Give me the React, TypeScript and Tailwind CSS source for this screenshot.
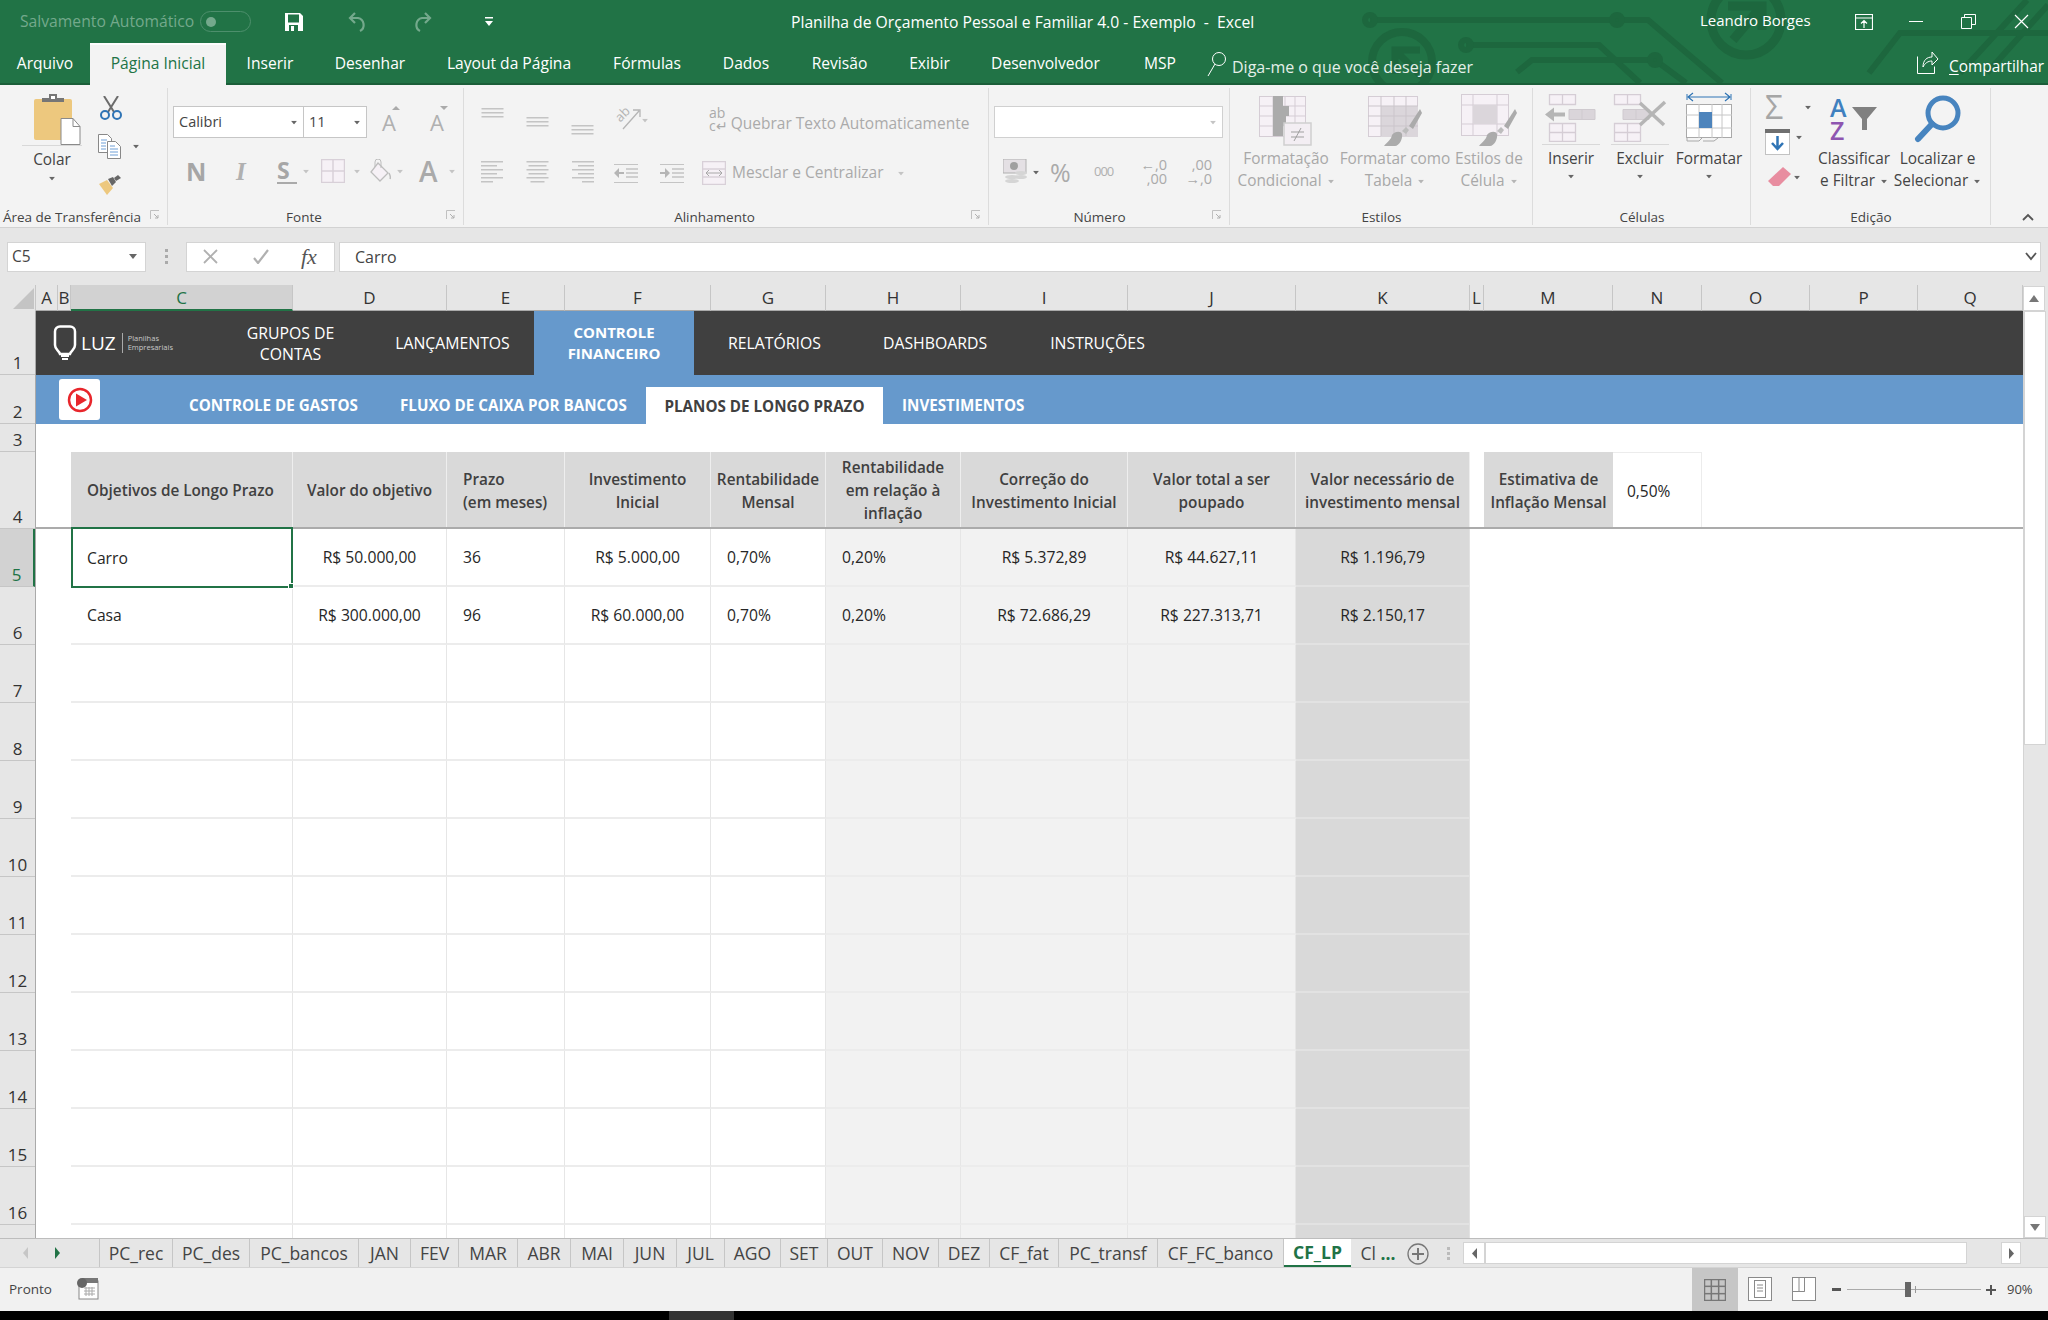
import type { ReactNode } from "react";

const disabledLine = "#c4c4c4";

function Caret({ color = "#666", className = "" }: { color?: string; className?: string }) {
  return (
    <svg width="8" height="5" viewBox="0 0 8 5" className={`shrink-0 ${className}`}>
      <path d="M0 0h8L4 5z" fill={color} />
    </svg>
  );
}

function Launcher() {
  return (
    <svg width="10" height="10" viewBox="0 0 10 10" className="absolute right-[8px] bottom-[7px]">
      <path d="M0.5 9V0.5H9" fill="none" stroke="#c0c0c0" />
      <path d="M4 4l4 4M8 5v3H5" fill="none" stroke="#b0b0b0" />
    </svg>
  );
}

function Group({ w, label, labelClass = "", launcher, children }: { w: string; label: string; labelClass?: string; launcher?: boolean; children: ReactNode }) {
  return (
    <div className={`relative flex h-[142px] shrink-0 flex-col ${w}`}>
      <div className="flex-1">{children}</div>
      <div className={`h-[20px] text-center text-[13.5px] leading-[20px] whitespace-nowrap text-[#444] ${labelClass}`}>{label}</div>
      {launcher && <Launcher />}
      <div className="absolute top-[3px] right-0 bottom-[2px] w-px bg-[#dcdcdc]" />
    </div>
  );
}

function PasteIcon() {
  return (
    <svg width="48" height="52" viewBox="0 0 48 52" className="ml-[11px]">
      <rect x="0" y="6" width="38" height="41" rx="2" fill="#edc87e" />
      <path d="M8 9V5h7V1h8v4h7v4z" fill="#767676" />
      <rect x="17" y="3" width="4" height="3" fill="#fff" />
      <path d="M27 25.500h12l7 8v18H27z" fill="#fff" stroke="#8a8a8a" />
      <path d="M39 25.500v8h7" fill="none" stroke="#8a8a8a" />
    </svg>
  );
}

function ScissorsIcon() {
  return (
    <svg width="22" height="24" viewBox="0 0 22 24">
      <path d="M4 0l10 16M18 0L8 16" stroke="#6b6b6b" strokeWidth="2" fill="none" />
      <circle cx="5" cy="19" r="4" fill="none" stroke="#2f74b5" strokeWidth="2" />
      <circle cx="17" cy="19" r="4" fill="none" stroke="#2f74b5" strokeWidth="2" />
    </svg>
  );
}

function CopyIcon() {
  return (
    <svg width="23" height="25" viewBox="0 0 23 25">
      <path d="M.5.5h9l4 4v14H.5z" fill="#fff" stroke="#888" />
      <path d="M9.500 7.500h8l5 5v12h-13z" fill="#fff" stroke="#888" />
      <path d="M3 6h6M3 9h5M3 12h5M3 15h5M12 12h5M12 15h8M12 18h8M12 21h8" stroke="#6f9fd6" />
    </svg>
  );
}

function BrushIcon() {
  return (
    <svg width="23" height="20" viewBox="0 0 23 20">
      <path d="M0 9l8-4 6 8-6 7z" fill="#edc87e" />
      <path d="M9 4l5-2 3 5-4 4z" fill="#666" />
      <path d="M15 3l4-3 3 3-5 3z" fill="#666" />
    </svg>
  );
}

function TableIcon({ w, h, cols, rows, stroke = "#d8d0d8", fill = "#f6f1f6" }: { w: number; h: number; cols: number; rows: number; stroke?: string; fill?: string }) {
  const xs = Array.from({ length: cols - 1 }, (_, i) => ((i + 1) * w) / cols);
  const ys = Array.from({ length: rows - 1 }, (_, i) => ((i + 1) * h) / rows);
  return (
    <svg width={w} height={h} viewBox={`0 0 ${w} ${h}`} className="shrink-0">
      <rect x=".5" y=".5" width={w - 1} height={h - 1} fill={fill} stroke={stroke} strokeWidth="1.5" />
      {xs.map((x) => (
        <path key={x} d={`M${x} 0V${h}`} stroke={stroke} strokeWidth="1.5" />
      ))}
      {ys.map((y) => (
        <path key={y} d={`M0 ${y}H${w}`} stroke={stroke} strokeWidth="1.5" />
      ))}
    </svg>
  );
}

function LinesIcon({ widths, align = "center", className = "" }: { widths: number[]; align?: "left" | "center" | "right"; className?: string }) {
  return (
    <svg width="23" height={widths.length * 4} viewBox={`0 0 23 ${widths.length * 4}`} className={`shrink-0 ${className}`}>
      {widths.map((wd, i) => {
        const x = align === "left" ? 0 : align === "right" ? 23 - wd : (23 - wd) / 2;
        return <rect key={i} x={x} y={i * 4} width={wd} height="1.5" fill={disabledLine} />;
      })}
    </svg>
  );
}

function IndentIcon({ right }: { right?: boolean }) {
  return (
    <svg width="24" height="19" viewBox="0 0 24 19" className="shrink-0">
      <path d="M0 .5h24M0 18.500h24" stroke={disabledLine} />
      <path d="M12 5h12M12 9h12M12 13h12" stroke={disabledLine} strokeWidth="1.4" />
      {right ? <path d="M0 8h5V4l5 5-5 5v-4H0z" fill="#b5b5b5" /> : <path d="M10 8H5V4L0 9l5 5v-4h5z" fill="#b5b5b5" />}
    </svg>
  );
}

function FormatIcon({ kind }: { kind: "cond" | "table" | "cell" }) {
  if (kind === "cond") {
    return (
      <svg width="54" height="50" viewBox="0 0 54 50">
        <rect x=".5" y=".5" width="46" height="40" fill="#f6f1f6" stroke="#d5cdd5" />
        <path d="M0 10h46M0 20h46M0 30h46M14 0v40M26 0v40M36 0v40" stroke="#d5cdd5" />
        <path d="M14 0h10v10h6v10h-3v10h-3v10H14z" fill="#ababab" />
        <rect x="25" y="27" width="27" height="22" fill="#f3eef3" stroke="#cfcfcf" strokeWidth="1.5" />
        <path d="M32 36h13M32 41h13M42 32l-7 13" stroke="#9f9f9f" />
      </svg>
    );
  }
  if (kind === "table") {
    return (
      <svg width="54" height="50" viewBox="0 0 54 50">
        <rect x=".5" y=".5" width="49" height="40" fill="#f6f1f6" stroke="#d5cdd5" />
        <rect x="13" y="10" width="37" height="31" fill="#dbd6db" />
        <path d="M0 10h50M0 20h50M0 30h50M13 0v40M26 0v40M38 0v40" stroke="#cbc5cb" />
        <path d="M52 13l2 4-9 16-4-3z" fill="#ababab" />
        <path d="M38 31l-4 4 4 3 3-4z" fill="#bdbdbd" />
        <path d="M16 50c4-5 7-6 8-11 3-4 9-4 10-1 1 5-3 12-7 12z" fill="#ababab" />
      </svg>
    );
  }
  return (
    <svg width="56" height="52" viewBox="0 0 56 52">
      <rect x=".5" y=".5" width="47" height="41" fill="#f6f1f6" stroke="#d5cdd5" />
      <path d="M0 11h48M0 30h48M12 0v41M36 0v41" stroke="#d5cdd5" />
      <rect x="12" y="11" width="24" height="19" fill="#dbd6db" />
      <path d="M54 15l2 4-9 16-4-3z" fill="#ababab" />
      <path d="M40 33l-4 4 4 3 3-4z" fill="#bdbdbd" />
      <path d="M18 52c4-5 7-6 8-11 3-4 9-4 10-1 1 5-3 12-7 12z" fill="#ababab" />
    </svg>
  );
}

function InsertIcon() {
  return (
    <svg width="52" height="48" viewBox="0 0 52 48">
      <g fill="#f6f1f6" stroke="#d5cdd5" strokeWidth="1.3">
        <path d="M4.500.5h26v10h-26zM17.500.5v10" />
        <path d="M4.500 29.500h26v18h-26zM4.500 38.500h26M17.500 29.500v18" />
      </g>
      <path d="M24 15.500h26v10H24zM37 15.500v10" fill="#dad5da" stroke="#cfcacf" />
      <path d="M20 18.500H9v-5L0 20.500l9 7v-5h11z" fill="#b5b5b5" />
    </svg>
  );
}

function DeleteIcon() {
  return (
    <svg width="54" height="48" viewBox="0 0 54 48">
      <g fill="#f6f1f6" stroke="#d5cdd5" strokeWidth="1.3">
        <path d="M1.500.5h26v10h-26zM14.500.5v10" />
        <path d="M1.500 29.500h26v18h-26zM1.500 38.500h26M14.500 29.500v18" />
      </g>
      <path d="M10 15.500h26v10H10zM23 15.500v10" fill="#dad5da" stroke="#cfcacf" />
      <path d="M27 9l24 22M52 8L27 31" stroke="#b5b5b5" strokeWidth="3.500" />
    </svg>
  );
}

function FormatCellIcon() {
  return (
    <svg width="46" height="50" viewBox="0 0 46 50">
      <path d="M1 2v6M45 2v6" stroke="#2f74b5" />
      <path d="M3 5h40M7 1L2 5l5 4M39 1l5 4-5 4" stroke="#2f74b5" fill="none" strokeWidth="1.200" />
      <rect x=".5" y="12.500" width="45" height="33" fill="#fff" stroke="#a9a9a9" />
      <path d="M0 23h46M0 36h46M13 12v34M26 12v34M36 12v34" stroke="#c6c6c6" />
      <rect x="13" y="20" width="13" height="16" fill="#4d84bc" />
      <path d="M1 46v3h12l3-3M17 49h11l4-3" fill="none" stroke="#a9a9a9" />
    </svg>
  );
}

function StyleButton({ w, icon, lines }: { w: string; icon: ReactNode; lines: [string, string] }) {
  return (
    <div className={`flex shrink-0 flex-col items-center ${w}`}>
      <div className="mt-[9px] flex h-[52px] items-end">{icon}</div>
      <div className="mt-[2px] text-center text-[15.4px] leading-[22px] whitespace-nowrap text-[#a8a8a8]">
        <div>{lines[0]}</div>
        <div className="flex items-center justify-center gap-[5px]">
          {lines[1]}
          <Caret color="#b5b5b5" className="scale-75" />
        </div>
      </div>
    </div>
  );
}

function CellButton({ w, icon, label, line }: { w: string; icon: ReactNode; label: string; line?: boolean }) {
  return (
    <div className={`flex shrink-0 flex-col items-center ${w}`}>
      <div className="flex h-[60px] items-end">{icon}</div>
      <div className={`mt-[2px] w-[58px] ${line ? "border-t border-[#d8d8d8]" : "border-t border-transparent"}`} />
      <div className="mt-[3px] text-[15.4px] leading-[22px] whitespace-nowrap text-[#444]">{label}</div>
      <Caret className="mt-[4px] scale-75" />
    </div>
  );
}

function Ribbon() {
  return (
    <div className="flex h-[143px] border-b border-[#d2d2d2] bg-[#f3f3f3]">
      <Group w="w-[168px]" label="Área de Transferência" labelClass="pr-[24px]" launcher>
        <div className="flex">
          <div className="mt-[8px] ml-[22px] flex w-[60px] flex-col items-center">
            <PasteIcon />
            <div className="w-[60px] border-t border-[#d8d8d8]" />
            <div className="mt-[3px] text-[15.4px] leading-[22px] text-[#444]">Colar</div>
            <Caret className="mt-[5px] scale-75" />
          </div>
          <div className="mt-[11px] ml-[16px] flex flex-col">
            <div className="ml-[2px]">
              <ScissorsIcon />
            </div>
            <div className="mt-[14px] flex items-center gap-[11px]">
              <CopyIcon />
              <Caret className="scale-75" />
            </div>
            <div className="mt-[16px] ml-[1px]">
              <BrushIcon />
            </div>
          </div>
        </div>
      </Group>

      <Group w="w-[296px]" label="Fonte" labelClass="pr-[24px]" launcher>
        <div className="mt-[21px] ml-[5px] flex h-[32px] items-center">
          <div className="flex h-[32px] w-[131px] items-center justify-between border border-[#c6c6c6] bg-white px-[5px] text-[14.5px] text-[#444]">
            Calibri
            <Caret className="scale-75" />
          </div>
          <div className="-ml-px flex h-[32px] w-[64px] items-center justify-between border border-[#c6c6c6] bg-white px-[5px] text-[14.5px] text-[#444]">
            11
            <Caret className="scale-75" />
          </div>
          <div className="relative ml-[15px] w-[17px] text-[22px] leading-none text-[#b0b0b0]">
            A
            <svg width="8" height="4" viewBox="0 0 8 4" className="absolute -top-[5px] left-[10px]">
              <path d="M0 4h8L4 0z" fill="#aaa" />
            </svg>
          </div>
          <div className="relative ml-[31px] w-[17px] text-[22px] leading-none text-[#b0b0b0]">
            A
            <svg width="8" height="4" viewBox="0 0 8 4" className="absolute -top-[5px] left-[10px]">
              <path d="M0 0h8L4 4z" fill="#aaa" />
            </svg>
          </div>
        </div>
        <div className="mt-[21px] ml-[18px] flex h-[24px] items-center">
          <span className="w-[20px] text-[25px] leading-none font-bold text-[#a6a6a6]">N</span>
          <span className="ml-[30px] w-[14px] font-['Liberation_Serif',serif] text-[25px] leading-none font-bold text-[#b0b0b0] italic">I</span>
          <span className="ml-[27px] w-[20px] border-b-2 border-[#aaa] text-[23px] leading-[23px] font-bold text-[#a6a6a6]">S</span>
          <Caret color="#c4c4c4" className="ml-[5px] scale-75" />
          <div className="ml-[11px]">
            <TableIcon w={24} h={24} cols={2} rows={2} />
          </div>
          <Caret color="#c4c4c4" className="ml-[8px] scale-75" />
          <svg width="22" height="24" viewBox="0 0 22 24" className="ml-[8px]">
            <path d="M9 4l10 10-8 8L2 13z" fill="#f6f1f6" stroke="#bdbdbd" strokeWidth="1.300" />
            <path d="M6 8V3a3 3 0 0 1 6 0v6" fill="none" stroke="#bdbdbd" />
            <path d="M20 14c1 2 2 4 1 6" stroke="#bdbdbd" fill="none" strokeWidth="1.500" />
          </svg>
          <Caret color="#c4c4c4" className="ml-[5px] scale-75" />
          <span className="ml-[15px] w-[22px] text-[28px] leading-none font-semibold text-[#aaa]">A</span>
          <Caret color="#c4c4c4" className="ml-[7px] scale-75" />
        </div>
      </Group>

      <Group w="w-[525px]" label="Alinhamento" labelClass="pr-[24px]" launcher>
        <div className="ml-[17px] flex h-[52px] items-start">
          <LinesIcon widths={[22, 22, 22]} className="mt-[23px]" />
          <LinesIcon widths={[22, 22, 22]} className="mt-[32px] ml-[22px]" />
          <LinesIcon widths={[22, 22, 22]} className="mt-[40px] ml-[22px]" />
          <svg width="26" height="26" viewBox="0 0 26 26" className="mt-[20px] ml-[21px] overflow-visible">
            <text x="2" y="14" transform="rotate(-45 8 12)" fontSize="13" fill="#b5b5b5" fontFamily="Open Sans">ab</text>
            <path d="M8 24L24 6M18 5h7v7" fill="none" stroke="#b5b5b5" strokeWidth="1.300" />
          </svg>
          <Caret color="#c4c4c4" className="mt-[33px] scale-75" />
          <div className="mt-[21px] ml-[60px] flex flex-col text-[14px] leading-[13px] font-medium text-[#aaa]">
            <span>ab</span>
            <span>c↵</span>
          </div>
          <span className="mt-[25px] ml-[3px] w-[240px] text-[15.500px] leading-[26px] whitespace-nowrap text-[#aaa]">Quebrar Texto Automaticamente</span>
        </div>
        <div className="mt-[24px] ml-[17px] flex h-[24px] items-center">
          <LinesIcon widths={[22, 16, 22, 16, 22, 12]} align="left" />
          <LinesIcon widths={[22, 18, 22, 18, 22, 14]} className="ml-[22px]" />
          <LinesIcon widths={[22, 16, 22, 16, 22, 12]} align="right" className="ml-[22px]" />
          <div className="ml-[20px]">
            <IndentIcon />
          </div>
          <div className="ml-[22px]">
            <IndentIcon right />
          </div>
          <div className="relative ml-[18px]">
            <TableIcon w={24} h={24} cols={1} rows={3} />
            <svg width="18" height="8" viewBox="0 0 18 8" className="absolute top-[8px] left-[3px]">
              <path d="M1 4h16M4 1L1 4l3 3M14 1l3 3-3 3" fill="none" stroke="#a8a8a8" />
            </svg>
          </div>
          <span className="ml-[6px] w-[165px] text-[15.500px] whitespace-nowrap text-[#aaa]">Mesclar e Centralizar</span>
          <Caret color="#c4c4c4" className="scale-75" />
        </div>
      </Group>

      <Group w="w-[241px]" label="Número" labelClass="pr-[20px]" launcher>
        <div className="mt-[21px] ml-[5px] flex h-[32px] w-[229px] items-center justify-end border border-[#d0d0d0] bg-white pr-[5px]">
          <Caret color="#c4c4c4" className="scale-75" />
        </div>
        <div className="mt-[22px] ml-[14px] flex h-[24px] items-center">
          <svg width="24" height="26" viewBox="0 0 24 26" className="shrink-0">
            <rect x="0" y="0" width="23" height="14" fill="#e4e0e4" stroke="#b0b0b0" />
            <circle cx="11" cy="7" r="4" fill="#a0a0a0" />
            <ellipse cx="9" cy="18" rx="7" ry="2" fill="#d5d5d5" />
            <ellipse cx="9" cy="22" rx="7" ry="2" fill="#d5d5d5" />
            <ellipse cx="18" cy="14" rx="6" ry="2" fill="#d5d5d5" />
            <ellipse cx="18" cy="18" rx="6" ry="2" fill="#d5d5d5" />
          </svg>
          <Caret className="ml-[5px] scale-75" />
          <span className="ml-[10px] w-[24px] text-[25px] leading-none text-[#aaa]">%</span>
          <span className="ml-[20px] w-[26px] text-[13px] tracking-[-1px] text-[#b0b0b0]">000</span>
          <div className="ml-[20px] flex w-[27px] flex-col text-[14.500px] leading-[14px] text-[#aaa]">
            <span className="text-right">←,0</span>
            <span className="text-right">,00</span>
          </div>
          <div className="ml-[18px] flex w-[27px] flex-col text-[14.500px] leading-[14px] text-[#aaa]">
            <span className="text-right">,00</span>
            <span className="text-right">→,0</span>
          </div>
        </div>
      </Group>

      <Group w="w-[303px]" label="Estilos">
        <div className="flex">
          <StyleButton w="w-[112px]" icon={<FormatIcon kind="cond" />} lines={["Formatação", "Condicional"]} />
          <StyleButton w="w-[106px]" icon={<FormatIcon kind="table" />} lines={["Formatar como", "Tabela"]} />
          <StyleButton w="w-[82px]" icon={<FormatIcon kind="cell" />} lines={["Estilos de", "Célula"]} />
        </div>
      </Group>

      <Group w="w-[218px]" label="Células">
        <div className="mt-[-3px] flex">
          <CellButton w="w-[76px]" icon={<InsertIcon />} label="Inserir" line />
          <CellButton w="w-[62px]" icon={<DeleteIcon />} label="Excluir" line />
          <CellButton w="w-[76px]" icon={<FormatCellIcon />} label="Formatar" />
        </div>
      </Group>

      <Group w="w-[240px]" label="Edição">
        <div className="flex">
          <div className="mt-[10px] ml-[14px] flex w-[49px] shrink-0 flex-col">
            <div className="flex items-center gap-[18px]">
              <span className="w-[21px] text-[32px] leading-[24px] text-[#a6a6a6]">Σ</span>
              <Caret className="scale-75" />
            </div>
            <div className="mt-[10px] flex items-center gap-[2px]">
              <svg width="25" height="26" viewBox="0 0 25 26" className="shrink-0">
                <rect x=".5" y=".5" width="24" height="25" fill="#fff" stroke="#c2c2c2" />
                <rect x="0" y="0" width="25" height="4" fill="#6f6f6f" />
                <path d="M12.500 7v13M7 14l5.500 6 5.500-6" fill="none" stroke="#2f74b5" strokeWidth="2.500" />
              </svg>
              <Caret className="-mt-[10px] ml-[3px] scale-75" />
            </div>
            <div className="mt-[12px] flex items-center">
              <svg width="23" height="20" viewBox="0 0 23 20" className="ml-[3px] shrink-0">
                <path d="M15 0l8 7-12 12H5l-5-5z" fill="#e88da0" />
              </svg>
              <Caret className="ml-[2px] scale-75" />
            </div>
          </div>
          <div className="flex w-[80px] shrink-0 flex-col items-center">
            <div className="mt-[11px] flex h-[46px] w-[48px] items-start">
              <div className="flex w-[20px] flex-col text-[25px] leading-[23px] font-semibold">
                <span className="text-[#3f80bf]">A</span>
                <span className="text-[#8e55b0]">Z</span>
              </div>
              <svg width="26" height="24" viewBox="0 0 26 24" className="mt-[11px] ml-[2px] shrink-0">
                <path d="M0 0h25L15 12v11h-5V12z" fill="#808080" />
              </svg>
            </div>
            <div className="mt-[6px] text-center text-[15.4px] leading-[22px] whitespace-nowrap text-[#444]">
              <div>Classificar</div>
              <div className="flex items-center justify-center gap-[5px]">
                e Filtrar
                <Caret className="scale-75" />
              </div>
            </div>
          </div>
          <div className="flex w-[87px] shrink-0 flex-col items-center">
            <svg width="48" height="48" viewBox="0 0 48 48" className="mt-[10px]">
              <circle cx="29" cy="18" r="15" fill="none" stroke="#4784bf" strokeWidth="5" />
              <path d="M18 29L4 44" stroke="#4784bf" strokeWidth="6" strokeLinecap="round" />
            </svg>
            <div className="mt-[5px] text-center text-[15.4px] leading-[22px] whitespace-nowrap text-[#444]">
              <div>Localizar e</div>
              <div className="flex items-center justify-center gap-[5px]">
                Selecionar
                <Caret className="scale-75" />
              </div>
            </div>
          </div>
        </div>
      </Group>

      <div className="flex flex-1 items-end justify-end pr-[14px] pb-[6px]">
        <svg width="12" height="8" viewBox="0 0 12 8">
          <path d="M1 7l5-5 5 5" fill="none" stroke="#555" strokeWidth="1.800" />
        </svg>
      </div>
    </div>
  );
}

function TitleCircuit() {
  return (
    <svg width="698" height="83" viewBox="1350 0 698 83" className="absolute top-0 right-0" fill="none" stroke="#1d673e">
      <g strokeWidth="6">
        <path d="M1370 20H1648L1722 83" />
        <circle cx="1370" cy="20" r="5" />
        <circle cx="1617" cy="20" r="5" />
        <path d="M1466 45H1599L1640 83" />
        <circle cx="1466" cy="45" r="5" />
        <path d="M1517 72L1532 60H1655L1686 83" />
        <circle cx="1655" cy="60" r="5" />
        <path d="M1869 73L1900 33H2048M1960 73L2027 0M1987 73L2048 5" />
      </g>
      <circle cx="1746" cy="20" r="35" strokeWidth="9" />
      <path d="M1733 40L1760 8M1728 6H1762V30" strokeWidth="9" />
      <circle cx="1402" cy="62" r="30" strokeWidth="8" />
      <path d="M1425 80L1397 52M1395 74V50H1420" strokeWidth="7" />
    </svg>
  );
}

function Header() {
  const tabs: [string, string][] = [
    ["Arquivo", "w-[90px]"],
    ["Página Inicial", "w-[136px]"],
    ["Inserir", "w-[88px]"],
    ["Desenhar", "w-[112px]"],
    ["Layout da Página", "w-[166px]"],
    ["Fórmulas", "w-[110px]"],
    ["Dados", "w-[88px]"],
    ["Revisão", "w-[99px]"],
    ["Exibir", "w-[81px]"],
    ["Desenvolvedor", "w-[151px]"],
    ["MSP", "w-[78px]"],
  ];
  return (
    <div className="relative bg-[#217346] text-white">
      <TitleCircuit />
      <div className="relative flex h-[43px] items-center">
        <span className="ml-[20px] w-[180px] text-[15.7px] whitespace-nowrap text-[#74a98c]">Salvamento Automático</span>
        <div className="flex h-[21px] w-[51px] items-center rounded-full border border-[#4d8f6c] pl-[5px]">
          <div className="h-[10px] w-[10px] rounded-full bg-[#74a98c]" />
        </div>
        <svg width="18" height="18" viewBox="0 0 18 18" className="ml-[34px]">
          <path d="M0 0h15l3 3v15H0z" fill="#fff" />
          <rect x="3" y="1.500" width="11" height="8" fill="#217346" />
          <rect x="4" y="12" width="9" height="6" fill="#217346" />
          <rect x="6" y="13" width="3" height="5" fill="#fff" />
        </svg>
        <svg width="20" height="20" viewBox="0 0 20 20" className="ml-[45px]" fill="none" stroke="#74a98c" strokeWidth="2.200">
          <path d="M7 1L2 6l5 5M2 6h8a7 7 0 0 1 2 13" />
        </svg>
        <svg width="20" height="20" viewBox="0 0 20 20" className="ml-[44px]" fill="none" stroke="#74a98c" strokeWidth="2.200">
          <path d="M13 1l5 5-5 5M18 6h-8a7 7 0 0 0-2 13" />
        </svg>
        <svg width="8" height="9" viewBox="0 0 8 9" className="ml-[53px]">
          <path d="M0 0h8v1.500H0zM0 4h8L4 9z" fill="#fff" />
        </svg>
        <span className="ml-[298px] w-[909px] pt-[2px] text-[15.7px] whitespace-pre">Planilha de Orçamento Pessoal e Familiar 4.0 - Exemplo  -  Excel</span>
        <span className="w-[155px] pb-[2px] text-[15px] whitespace-nowrap">Leandro Borges</span>
        <svg width="18" height="16" viewBox="0 0 18 16" fill="none" stroke="#fff">
          <path d="M.5.500h17v15H.500zM1 4h16M9 14V7M6 9.500L9 6.500l3 3" strokeWidth="1.200" />
        </svg>
        <div className="ml-[36px] h-px w-[14px] bg-white" />
        <svg width="15" height="15" viewBox="0 0 15 15" fill="none" stroke="#fff" className="ml-[38px]">
          <path d="M.5 3.500h10v11H.500zM3.500 3.500V.5h11v10h-4" />
        </svg>
        <svg width="15" height="15" viewBox="0 0 15 15" fill="none" stroke="#fff" strokeWidth="1.200" className="ml-[38px]">
          <path d="M1 1l13 13M14 1L1 14" />
        </svg>
      </div>
      <div className="relative flex h-[42px] items-stretch border-b-2 border-[#1b5e39] text-[15.6px]">
        {tabs.map(([name, w]) => (
          <div
            key={name}
            className={`flex shrink-0 items-center justify-center whitespace-nowrap ${w} ${name === "Página Inicial" ? "-mb-[2px] border-t-2 border-white/80 bg-[#f3f3f3] pb-[2px] text-[#217346]" : "pt-[2px]"}`}
          >
            {name}
          </div>
        ))}
        <svg width="20" height="26" viewBox="0 0 20 26" fill="none" stroke="#fff" className="mt-[8px] ml-[8px]">
          <circle cx="12" cy="8" r="6.500" />
          <path d="M8 13L1 25" />
        </svg>
        <span className="mt-[12px] ml-[5px] w-[685px] text-[16px] whitespace-nowrap text-[#e4efe9]">Diga-me o que você deseja fazer</span>
        <svg width="22" height="24" viewBox="0 0 22 24" fill="none" stroke="#fff" className="mt-[8px]">
          <path d="M.5 5.500v17h17v-7M6 16c0-7 4-10 9-10V1l6 7-6 6V10c-4 0-7 2-9 6z" />
        </svg>
        <span className="mt-[12px] ml-[10px] text-[15.4px] whitespace-nowrap">
          <span className="underline underline-offset-2">C</span>ompartilhar
        </span>
      </div>
    </div>
  );
}

function FormulaBar() {
  return (
    <div className="flex h-[57px] items-center bg-[#e6e6e6] text-[#444]">
      <div className="ml-[7px] flex h-[30px] w-[139px] items-center justify-between border border-[#d4d4d4] bg-white pr-[8px] pl-[4px] text-[15.5px]">
        C5
        <Caret />
      </div>
      <div className="ml-[19px] flex w-[3px] flex-col gap-[3px]">
        <div className="h-[3px] w-[3px] bg-[#aaa]" />
        <div className="h-[3px] w-[3px] bg-[#aaa]" />
        <div className="h-[3px] w-[3px] bg-[#aaa]" />
      </div>
      <div className="ml-[18px] flex h-[30px] w-[149px] items-center border border-[#d4d4d4] bg-white">
        <svg width="15" height="15" viewBox="0 0 15 15" className="ml-[16px]" stroke="#b0b0b0" strokeWidth="1.800" fill="none">
          <path d="M1 1l13 13M14 1L1 14" />
        </svg>
        <svg width="16" height="15" viewBox="0 0 16 15" className="ml-[35px]" stroke="#b0b0b0" strokeWidth="2.200" fill="none">
          <path d="M1 9l4 5 10-13" />
        </svg>
        <span className="ml-[32px] font-['Liberation_Serif',serif] text-[22px] text-[#555] italic">fx</span>
      </div>
      <div className="ml-[4px] flex h-[30px] w-[1702px] items-center justify-between border border-[#d4d4d4] bg-white pr-[3px] pl-[15px] text-[16px]">
        Carro
        <svg width="12" height="9" viewBox="0 0 12 9" fill="none" stroke="#555" strokeWidth="1.800">
          <path d="M1 1l5 6 5-6" />
        </svg>
      </div>
    </div>
  );
}

const columns: [string, string][] = [
  ["A", "w-[22px]"],
  ["B", "w-[13px]"],
  ["C", "w-[222px]"],
  ["D", "w-[154px]"],
  ["E", "w-[118px]"],
  ["F", "w-[146px]"],
  ["G", "w-[115px]"],
  ["H", "w-[135px]"],
  ["I", "w-[167px]"],
  ["J", "w-[168px]"],
  ["K", "w-[174px]"],
  ["L", "w-[14px]"],
  ["M", "w-[129px]"],
  ["N", "w-[89px]"],
  ["O", "w-[108px]"],
  ["P", "w-[108px]"],
  ["Q", "w-[105px]"],
];

function ColumnHeaders() {
  return (
    <div className="flex h-[26px] bg-[#e6e6e6] text-[17px] text-[#333]">
      <div className="flex w-[36px] shrink-0 items-end justify-end border-r border-[#c6c6c6] pr-[1px] pb-[2px]">
        <svg width="21" height="21" viewBox="0 0 21 21">
          <path d="M21 0v21H0z" fill="#c4c4c4" />
        </svg>
      </div>
      {columns.map(([name, w]) => (
        <div
          key={name}
          className={`flex shrink-0 items-center justify-center border-r border-b border-r-[#c6c6c6] pt-[1px] ${w} ${name === "C" ? "border-b-2 border-b-[#217346] bg-[#d2d2d2] text-[#217346]" : "border-b-[#aaa]"}`}
        >
          {name}
        </div>
      ))}
      <div className="relative flex-1">
        <div className="mt-px flex h-[25px] w-[22px] items-center justify-center border border-[#d4d4d4] bg-white">
          <svg width="10" height="7" viewBox="0 0 10 7">
            <path d="M5 0l5 7H0z" fill="#777" />
          </svg>
        </div>
      </div>
    </div>
  );
}

const rowHeights: [string, string][] = [
  ["1", "h-[64px]"],
  ["2", "h-[49px]"],
  ["3", "h-[28px]"],
  ["4", "h-[77px]"],
  ...["5", "6", "7", "8", "9", "10", "11", "12", "13", "14", "15", "16"].map((n): [string, string] => [n, "h-[58px]"]),
];

function RowHeaders() {
  return (
    <div className="h-[927px] w-[36px] shrink-0 overflow-hidden border-r border-[#aaa] bg-[#e6e6e6] text-[17px] text-[#333]">
      {rowHeights.map(([n, h]) => (
        <div
          key={n}
          className={`flex shrink-0 items-end justify-center border-b border-b-[#c6c6c6] pb-[1px] leading-[20px] ${h} ${n === "5" ? "border-r-2 border-r-[#217346] bg-[#d2d2d2] text-[#217346]" : ""}`}
        >
          {n}
        </div>
      ))}
    </div>
  );
}

function Logo() {
  return (
    <div className="flex w-[174px] shrink-0 items-center text-white">
      <svg width="24" height="36" viewBox="0 0 24 36" fill="none" stroke="#fff" className="ml-[17px] shrink-0">
        <path d="M7 1.500h10a5 5 0 0 1 5 5V20c0 5-4 5-5 9H7c-1-4-5-4-5-9V6.500a5 5 0 0 1 5-5z" strokeWidth="2.500" />
        <path d="M8 31h8M9 34h6" strokeWidth="2" />
      </svg>
      <span className="ml-[4px] text-[19px] leading-none font-normal">LUZ</span>
      <div className="ml-[6px] h-[20px] w-px bg-[#aaa]" />
      <div className="ml-[5px] flex flex-col text-[7.5px] leading-[9px] text-[#c8c8c8]">
        <span>Planilhas</span>
        <span>Empresariais</span>
      </div>
    </div>
  );
}

function TopNav() {
  return (
    <div className="flex h-[64px] bg-[#404040] text-[15.8px] text-white">
      <Logo />
      <div className="flex w-[161px] shrink-0 items-center justify-center pt-[1px] text-center leading-[21px]">GRUPOS DE<br />CONTAS</div>
      <div className="flex w-[163px] shrink-0 items-center justify-center pt-[2px]">LANÇAMENTOS</div>
      <div className="flex w-[160px] shrink-0 items-center justify-center bg-[#6699cc] text-center text-[15px] leading-[21px] font-bold">CONTROLE<br />FINANCEIRO</div>
      <div className="flex w-[161px] shrink-0 items-center justify-center pt-[2px]">RELATÓRIOS</div>
      <div className="flex w-[160px] shrink-0 items-center justify-center pt-[2px]">DASHBOARDS</div>
      <div className="flex w-[165px] shrink-0 items-center justify-center pt-[2px]">INSTRUÇÕES</div>
    </div>
  );
}

function SubNav() {
  return (
    <div className="flex h-[49px] items-stretch bg-[#6699cc] text-[15.2px] font-bold whitespace-nowrap text-white">
      <div className="mt-[4px] ml-[23px] flex h-[41px] w-[41px] shrink-0 items-center justify-center rounded-[3px] bg-white">
        <svg width="26" height="26" viewBox="0 0 26 26">
          <circle cx="13" cy="13" r="11" fill="none" stroke="#e8262c" strokeWidth="2.500" />
          <path d="M9 6.500L20 13 9 19.500z" fill="#e8262c" />
        </svg>
      </div>
      <div className="w-[89px] shrink-0" />
      <div className="flex w-[211px] shrink-0 items-end pb-[7px]">CONTROLE DE GASTOS</div>
      <div className="flex w-[246px] shrink-0 items-end pb-[7px]">FLUXO DE CAIXA POR BANCOS</div>
      <div className="mt-[12px] flex w-[237px] shrink-0 items-center justify-center bg-white pt-[1px] text-[#404040]">PLANOS DE LONGO PRAZO</div>
      <div className="ml-[19px] flex items-end pb-[7px]">INVESTIMENTOS</div>
    </div>
  );
}

const tableCols = ["w-[222px]", "w-[154px]", "w-[118px]", "w-[146px]", "w-[115px]", "w-[135px]", "w-[167px]", "w-[168px]", "w-[174px]"];
const cellFill = ["bg-white", "bg-white", "bg-white", "bg-white", "bg-white", "bg-[#f2f2f2]", "bg-[#f2f2f2]", "bg-[#f2f2f2]", "bg-[#d9d9d9]"];
const cellAlign = ["pl-[16px]", "justify-center", "pl-[16px]", "justify-center", "pl-[16px]", "pl-[16px]", "justify-center", "justify-center", "justify-center"];

const headers: [string, string?, string?][] = [
  ["Objetivos de Longo Prazo"],
  ["Valor do objetivo"],
  ["Prazo", "(em meses)"],
  ["Investimento", "Inicial"],
  ["Rentabilidade", "Mensal"],
  ["Rentabilidade", "em relação à", "inflação"],
  ["Correção do", "Investimento Inicial"],
  ["Valor total a ser", "poupado"],
  ["Valor necessário de", "investimento mensal"],
];

const data = [
  ["Carro", "R$ 50.000,00", "36", "R$ 5.000,00", "0,70%", "0,20%", "R$ 5.372,89", "R$ 44.627,11", "R$ 1.196,79"],
  ["Casa", "R$ 300.000,00", "96", "R$ 60.000,00", "0,70%", "0,20%", "R$ 72.686,29", "R$ 227.313,71", "R$ 2.150,17"],
  ...Array.from({ length: 11 }, () => ["", "", "", "", "", "", "", "", ""]),
];

function HeaderRow() {
  return (
    <div className="flex h-[77px] border-b-2 border-[#ababab] text-[15.3px] leading-[23px] font-semibold text-[#404040]">
      <div className="w-[35px] shrink-0" />
      {headers.map((lines, i) => (
        <div
          key={i}
          className={`flex shrink-0 flex-col justify-center whitespace-nowrap border-r border-[#eeeeee] bg-[#d9d9d9] pt-[2px] ${tableCols[i]} ${i === 0 || i === 2 ? "items-start pl-[16px]" : "items-center"}`}
        >
          {lines.map((l) => (
            <span key={l}>{l}</span>
          ))}
        </div>
      ))}
      <div className="w-[14px] shrink-0" />
      <div className="flex w-[129px] shrink-0 flex-col items-center justify-center whitespace-nowrap bg-[#d9d9d9] pt-[2px]">
        <span>Estimativa de</span>
        <span>Inflação Mensal</span>
      </div>
      <div className="flex w-[89px] shrink-0 items-center border-t border-r border-[#ececec] pt-[2px] pl-[14px] text-[15.5px] font-normal text-[#262626]">0,50%</div>
    </div>
  );
}

function DataRows() {
  return (
    <>
      {data.map((row, r) => (
        <div key={r} className="flex h-[58px] shrink-0 text-[15.700px] text-[#262626]">
          <div className="w-[35px] shrink-0" />
          {row.map((value, c) => {
            const selected = r === 0 && c === 0;
            const edge = selected
              ? "z-10 -mt-[2px] h-[61px] border-2 border-[#217346] pt-[2px] pl-[14px]"
              : `border-r border-b-2 pt-[2px] ${c === 8 ? "border-r-[#e2e2e2] border-b-[#e2e2e2]" : "border-r-[#e6e6e6] border-b-[#ececec]"} ${cellAlign[c]}`;
            return (
              <div key={c} className={`relative flex shrink-0 items-center whitespace-nowrap ${tableCols[c]} ${cellFill[c]} ${edge}`}>
                {value}
                {selected && <div className="absolute -right-[3px] -bottom-[3px] h-[6px] w-[6px] border border-white bg-[#217346]" />}
              </div>
            );
          })}
        </div>
      ))}
    </>
  );
}

function VerticalScroll() {
  return (
    <div className="flex h-[927px] w-[25px] shrink-0 flex-col border-l border-[#d4d4d4] bg-[#e6e6e6]">
      <div className="h-[434px] w-[22px] border border-[#d4d4d4] bg-white" />
      <div className="flex-1" />
      <div className="flex h-[22px] w-[22px] items-center justify-center border border-[#d4d4d4] bg-white">
        <svg width="10" height="7" viewBox="0 0 10 7">
          <path d="M0 0h10L5 7z" fill="#777" />
        </svg>
      </div>
    </div>
  );
}

const sheetTabs: [string, string][] = [
  ["PC_rec", "w-[73px]"],
  ["PC_des", "w-[77px]"],
  ["PC_bancos", "w-[109px]"],
  ["JAN", "w-[52px]"],
  ["FEV", "w-[48px]"],
  ["MAR", "w-[59px]"],
  ["ABR", "w-[53px]"],
  ["MAI", "w-[53px]"],
  ["JUN", "w-[53px]"],
  ["JUL", "w-[48px]"],
  ["AGO", "w-[56px]"],
  ["SET", "w-[47px]"],
  ["OUT", "w-[55px]"],
  ["NOV", "w-[56px]"],
  ["DEZ", "w-[51px]"],
  ["CF_fat", "w-[69px]"],
  ["PC_transf", "w-[99px]"],
  ["CF_FC_banco", "w-[126px]"],
];

function SheetTabs() {
  return (
    <div className="flex h-[29px] items-stretch border-t border-[#bdbdbd] bg-[#e6e6e6] text-[17.500px] text-[#444]">
      <div className="flex w-[100px] shrink-0 items-center border-r border-[#c6c6c6] pl-[23px]">
        <svg width="5" height="12" viewBox="0 0 5 12">
          <path d="M5 0v12L0 6z" fill="#c6c6c6" />
        </svg>
        <svg width="5" height="12" viewBox="0 0 5 12" className="ml-[27px]">
          <path d="M0 0v12l5-6z" fill="#217346" />
        </svg>
      </div>
      {sheetTabs.map(([name, w]) => (
        <div key={name} className={`flex shrink-0 items-center justify-center whitespace-nowrap border-r border-[#c6c6c6] ${w}`}>
          {name}
        </div>
      ))}
      <div className="flex w-[67px] shrink-0 items-center justify-center border-b-2 border-[#217346] bg-white text-[17.500px] font-bold whitespace-nowrap text-[#217346]">CF_LP</div>
      <div className="flex w-[54px] shrink-0 items-center justify-center whitespace-pre">
        Cl <span className="font-bold text-[#217346]">...</span>
      </div>
      <svg width="22" height="22" viewBox="0 0 22 22" className="mt-[4px] ml-[2px] shrink-0" fill="none" stroke="#777">
        <circle cx="11" cy="11" r="10" strokeWidth="1.300" />
        <path d="M11 5v12M5 11h12" strokeWidth="2" />
      </svg>
      <div className="mt-[8px] ml-[18px] flex w-[3px] shrink-0 flex-col gap-[2px]">
        <div className="h-[3px] w-[3px] bg-[#bbb]" />
        <div className="h-[3px] w-[3px] bg-[#bbb]" />
        <div className="h-[3px] w-[3px] bg-[#bbb]" />
      </div>
      <div className="my-[3px] ml-[13px] flex w-[22px] shrink-0 items-center justify-center border border-[#d4d4d4] bg-white">
        <svg width="5" height="11" viewBox="0 0 5 11">
          <path d="M5 0v11L0 5.500z" fill="#666" />
        </svg>
      </div>
      <div className="my-[3px] w-[482px] shrink-0 border border-[#d4d4d4] bg-white" />
      <div className="w-[34px] shrink-0" />
      <div className="my-[3px] flex w-[20px] shrink-0 items-center justify-center border border-[#d4d4d4] bg-white">
        <svg width="5" height="11" viewBox="0 0 5 11">
          <path d="M0 0v11l5-5.500z" fill="#666" />
        </svg>
      </div>
    </div>
  );
}

function StatusBar() {
  return (
    <div className="flex h-[44px] items-stretch border-t border-[#d4d4d4] bg-[#f1f1f1] text-[#444]">
      <span className="ml-[9px] flex w-[68px] items-center text-[13.5px]">Pronto</span>
      <svg width="22" height="22" viewBox="0 0 22 22" className="mt-[10px]">
        <rect x="2" y="3" width="19" height="18" fill="#fff" stroke="#888" />
        <rect x="5" y="0" width="16" height="5" fill="#777" />
        <circle cx="5" cy="5" r="5" fill="#666" />
        <path d="M7 10h11M7 13h11M7 16h11M9 9v9M12 9v9M15 9v9" stroke="#aaa" />
      </svg>
      <div className="ml-[1593px] flex w-[46px] items-center justify-center bg-[#c6c6c6]">
        <TableIcon w={22} h={22} cols={3} rows={3} stroke="#777" fill="#c6c6c6" />
      </div>
      <svg width="24" height="24" viewBox="0 0 24 24" className="mt-[9px] ml-[10px]" fill="#fff" stroke="#8a8a8a">
        <rect x=".5" y=".5" width="23" height="23" />
        <rect x="6.500" y="3.500" width="11" height="17" />
        <path d="M9 8h6M9 11h6M9 14h6" />
      </svg>
      <svg width="24" height="24" viewBox="0 0 24 24" className="mt-[9px] ml-[20px]" fill="#fff" stroke="#8a8a8a">
        <rect x=".5" y=".5" width="23" height="23" />
        <path d="M.5 14.500h12V.5M12.500 14.500V.5M7 .5v14" fill="none" />
      </svg>
      <div className="ml-[16px] flex flex-1 items-center">
        <div className="h-[3px] w-[9px] bg-[#555]" />
        <div className="relative ml-[6px] h-px w-[134px] bg-[#aaa]">
          <div className="absolute -top-[7px] left-[58px] h-[15px] w-[6px] bg-[#666]" />
          <div className="absolute -top-[3px] left-[68px] h-[7px] w-px bg-[#999]" />
        </div>
        <div className="relative ml-[5px] h-[10px] w-[10px]">
          <div className="absolute top-[4px] h-[2px] w-[10px] bg-[#555]" />
          <div className="absolute left-[4px] h-[10px] w-[2px] bg-[#555]" />
        </div>
        <span className="ml-[11px] text-[13px]">90%</span>
      </div>
    </div>
  );
}

export default function App() {
  return (
    <div className="flex h-[1320px] w-[2048px] flex-col overflow-hidden bg-white font-['Open_Sans',sans-serif]">
      <Header />
      <Ribbon />
      <FormulaBar />
      <ColumnHeaders />
      <div className="flex h-[927px]">
        <RowHeaders />
        <div className="h-[927px] w-[1987px] shrink-0 overflow-hidden">
          <TopNav />
          <SubNav />
          <div className="h-[28px]" />
          <HeaderRow />
          <DataRows />
        </div>
        <VerticalScroll />
      </div>
      <SheetTabs />
      <StatusBar />
      <div className="flex h-[9px] bg-black">
        <div className="ml-[669px] w-[65px] bg-[#333]" />
      </div>
    </div>
  );
}
